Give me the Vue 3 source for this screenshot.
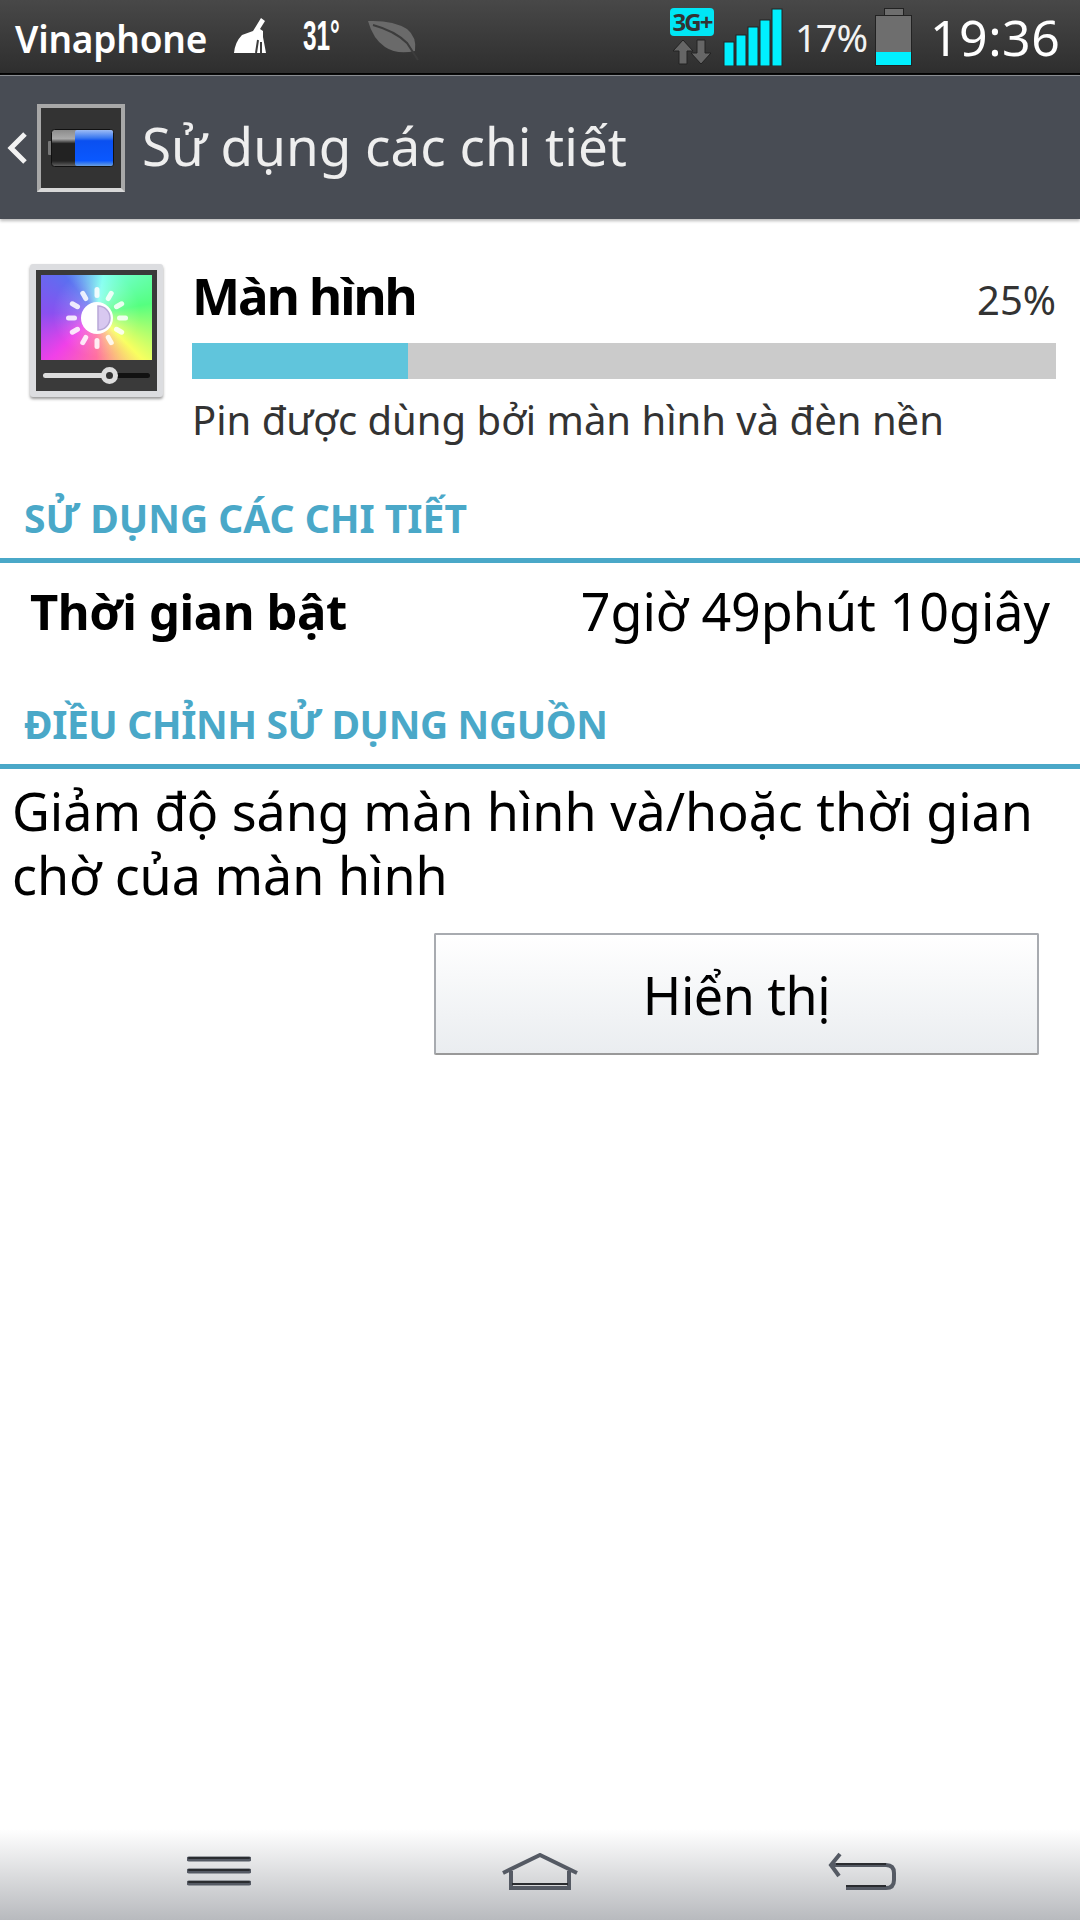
<script setup>
const ticks = [0, 30, 60, 90, 120, 150, 180, 210, 240, 270, 300, 330];
const bars = [
  { x: 1, h: 24 },
  { x: 13, h: 31 },
  { x: 25, h: 39 },
  { x: 37, h: 46 },
  { x: 49, h: 57 }
];
const batteryUsed = 25;
</script>

<template>
  <main class="screen">
    <div class="statusbar">
      <div class="status-left">
        <span class="carrier">Vinaphone</span>
        <svg class="broom" width="34" height="36" viewBox="0 0 34 36">
          <path d="M28 0 L32 3 L27 11 L30 13 L30 19 L33 35 L1 35 Q2 24 9 17 L20 13 Z" fill="#fff" />
          <path d="M25 22 L23 35 M28 24 L28 35" stroke="#3c3c3c" stroke-width="2" />
        </svg>
        <span class="temp">31°</span>
        <svg class="leaf" width="54" height="44" viewBox="0 0 54 44">
          <path d="M1 2 Q26 1 40 10 Q50 18 48 32 Q30 36 18 28 Q6 20 1 2 Z" fill="#6a6a6a" />
          <path d="M6 6 Q28 12 40 24 L51 41" stroke="#3c3c3c" stroke-width="2" fill="none" />
        </svg>
      </div>
      <div class="status-right">
        <div class="network">
          <span class="net-badge">3G+</span>
          <svg width="40" height="26" viewBox="0 0 40 26">
            <path d="M11 1 L21 12 L15 12 L15 25 L7 25 L7 12 L1 12 Z" fill="#666" stroke="#222" />
            <path d="M29 25 L39 14 L33 14 L33 1 L25 1 L25 14 L19 14 Z" fill="#666" stroke="#222" />
          </svg>
        </div>
        <svg class="signal" width="60" height="58" viewBox="0 0 60 58">
          <rect
            v-for="bar in bars"
            :key="bar.x"
            :x="bar.x"
            :y="58 - bar.h"
            width="10"
            :height="bar.h"
            fill="#00f0ff"
            stroke="#222"
          />
        </svg>
        <span class="percent">17%</span>
        <div class="battery">
          <div class="battery-cap"></div>
          <div class="battery-body">
            <div class="battery-level"></div>
          </div>
        </div>
        <span class="clock">19:36</span>
      </div>
    </div>

    <header class="titlebar">
      <svg class="back" width="22" height="36" viewBox="0 0 22 36">
        <path d="M19 4 L5 18 L19 32" fill="none" stroke="#f2f2f2" stroke-width="5" />
      </svg>
      <div class="app-icon">
        <svg width="66" height="40" viewBox="0 0 66 40">
          <defs>
            <linearGradient id="cellBlue" x1="0" y1="0" x2="0" y2="1">
              <stop offset="0" stop-color="#9dbcf5" />
              <stop offset="0.22" stop-color="#3a78f0" />
              <stop offset="0.3" stop-color="#0a50f0" />
              <stop offset="0.85" stop-color="#0a58ff" />
              <stop offset="1" stop-color="#6aa0e0" />
            </linearGradient>
            <linearGradient id="cellDark" x1="0" y1="0" x2="0" y2="1">
              <stop offset="0" stop-color="#8a8a8a" />
              <stop offset="0.25" stop-color="#aaa" />
              <stop offset="0.38" stop-color="#222" />
              <stop offset="0.85" stop-color="#222" />
              <stop offset="1" stop-color="#666" />
            </linearGradient>
          </defs>
          <rect x="0" y="13" width="5" height="14" rx="1" fill="#777" />
          <rect x="3.5" y="1.5" width="62" height="37" rx="3" fill="url(#cellDark)" stroke="#111" />
          <rect x="27" y="2" width="38" height="36" rx="2" fill="url(#cellBlue)" />
        </svg>
      </div>
      <h1 class="title">Sử dụng các chi tiết</h1>
    </header>

    <section class="summary">
      <div class="display-icon">
        <div class="display-frame">
          <div class="display-colors">
            <svg width="64" height="64" viewBox="-32 -32 64 64">
              <rect
                v-for="t in ticks"
                :key="t"
                x="-2.5"
                y="-31"
                width="5"
                height="11"
                rx="2.5"
                fill="#fff"
                fill-opacity="0.85"
                :transform="`rotate(${t})`"
              />
              <circle r="16" fill="#fff" />
              <path d="M1 -12 A12 12 0 0 1 1 12 Z" fill="#d8c8f0" stroke="#b8a8d8" stroke-width="1.5" />
            </svg>
          </div>
          <div class="display-slider">
            <div class="slider-knob"></div>
          </div>
        </div>
      </div>
      <div class="summary-main">
        <div class="summary-head">
          <span class="summary-title">Màn hình</span>
          <span class="summary-value">25%</span>
        </div>
        <div class="usage-bar">
          <div class="usage-fill" :style="{ width: batteryUsed + '%' }"></div>
        </div>
        <p class="summary-desc">Pin được dùng bởi màn hình và đèn nền</p>
      </div>
    </section>

    <h2 class="section-label first">SỬ DỤNG CÁC CHI TIẾT</h2>
    <div class="time-row">
      <span class="time-label">Thời gian bật</span>
      <span class="time-value">7giờ 49phút 10giây</span>
    </div>

    <h2 class="section-label second">ĐIỀU CHỈNH SỬ DỤNG NGUỒN</h2>
    <p class="hint">Giảm độ sáng màn hình và/hoặc thời gian chờ của màn hình</p>
    <div class="actions">
      <button class="show-btn">Hiển thị</button>
    </div>

    <nav class="navbar">
      <svg width="64" height="32" viewBox="0 0 64 32">
        <path d="M2 3 H62 M2 15 H62 M2 27 H62" stroke="#555a64" stroke-width="5" stroke-linecap="round" />
        <path d="M2 2 H62 M2 14 H62 M2 26 H62" stroke="#2a2c30" stroke-width="2" stroke-linecap="round" />
      </svg>
      <svg width="76" height="38" viewBox="0 0 76 38">
        <path d="M1 20 L38 2 L75 20 M9 18 V35 H67 V18" fill="none" stroke="#555a64" stroke-width="4" />
        <path d="M10 31 H66" stroke="#2a2c30" stroke-width="2" />
      </svg>
      <svg width="70" height="40" viewBox="0 0 70 40">
        <path d="M12 2 L3 13 L11 24 M4 13 H58 Q66 13 66 21 V28 Q66 36 58 36 H18" fill="none" stroke="#555a64" stroke-width="4" />
        <path d="M8 12 H58 M18 34 H58" stroke="#2a2c30" stroke-width="2" />
      </svg>
    </nav>
  </main>
</template>

<style scoped>
.screen {
  width: 1080px;
  height: 1920px;
  display: flex;
  flex-direction: column;
  background: #fff;
  font-family: "Noto Sans", "Open Sans", sans-serif;
  color: #000;
  overflow: hidden;
}

.statusbar {
  height: 73px;
  flex: none;
  box-sizing: content-box;
  border-bottom: 2px solid #000;
  display: flex;
  justify-content: space-between;
  align-items: center;
  background: linear-gradient(#484848, #2e2e2e);
  color: #fff;
}

.status-left {
  display: flex;
  align-items: center;
  padding-left: 15px;
}

.carrier {
  font-size: 37px;
  font-weight: 600;
  letter-spacing: -0.2px;
  width: 218px;
  margin-top: 3px;
}

.broom {
  margin-top: -1px;
}

.temp {
  font-family: "Liberation Sans", sans-serif;
  font-size: 42px;
  font-weight: 700;
  transform: scaleX(0.58);
  transform-origin: left center;
  margin-left: 36px;
  width: 64px;
  margin-top: -1px;
  white-space: nowrap;
}

.leaf {
  margin-top: 8px;
}

.status-right {
  display: flex;
  align-items: center;
  padding-right: 23px;
}

.network {
  display: flex;
  flex-direction: column;
  align-items: center;
  gap: 3px;
  width: 46px;
}

.net-badge {
  width: 44px;
  height: 28px;
  background: #00e6f5;
  border-radius: 4px;
  color: #333;
  font-size: 24px;
  font-weight: 700;
  line-height: 28px;
  text-align: center;
  letter-spacing: -2px;
  white-space: nowrap;
}

.signal {
  margin-left: 8px;
}

.percent {
  font-size: 38px;
  margin-left: 12px;
  width: 80px;
  letter-spacing: -1px;
  color: #f2f2f2;
  white-space: nowrap;
}

.battery {
  display: flex;
  flex-direction: column;
  align-items: center;
  width: 37px;
  height: 58px;
}

.battery-cap {
  width: 18px;
  height: 6px;
  background: #6e6e6e;
  border: 1px solid #222;
  border-bottom: 0;
}

.battery-body {
  flex: 1;
  align-self: stretch;
  display: flex;
  align-items: flex-end;
  background: #6e6e6e;
  border: 1px solid #222;
}

.battery-level {
  width: 100%;
  height: 13px;
  background: #00f0ff;
}

.clock {
  font-size: 50px;
  width: 127px;
  margin-left: 18px;
  letter-spacing: 0.5px;
}

.titlebar {
  height: 144px;
  flex: none;
  box-sizing: border-box;
  display: flex;
  align-items: center;
  padding-left: 6px;
  background: #484c54;
  border-top: 1px solid #8a8d92;
  box-shadow: 0 2px 3px #bbb;
}

.back {
  flex: none;
}

.app-icon {
  width: 88px;
  height: 88px;
  flex: none;
  box-sizing: border-box;
  margin-left: 9px;
  display: flex;
  align-items: center;
  justify-content: center;
  background: #333;
  border: 4px solid #a8a8a8;
  border-bottom-color: #d8d8d8;
}

.title {
  margin: -4px 0 0 17px;
  font-size: 53px;
  font-weight: 400;
  color: #eee;
  white-space: nowrap;
}

.summary {
  display: flex;
  padding: 45px 24px 0 30px;
  flex: none;
}

.display-icon {
  width: 133px;
  height: 133px;
  flex: none;
  box-sizing: border-box;
  padding: 6px;
  background: #dcdde0;
  border-radius: 3px;
  box-shadow: 0 2px 3px #999;
}

.display-frame {
  height: 100%;
  box-sizing: border-box;
  padding: 5px;
  background: #3a3a3a;
}

.display-colors {
  height: 85px;
  display: flex;
  align-items: center;
  justify-content: center;
  background:
    radial-gradient(circle at 50% 45%, rgba(255, 255, 255, 0.3), rgba(255, 255, 255, 0) 60%),
    conic-gradient(from 10deg at 50% 45%, #7ffff0, #55ff80 70deg, #f8ff60 125deg, #ff70a0 170deg, #f040e8 215deg, #8a50f0 260deg, #5a70f0 310deg, #7ffff0);
}

.display-slider {
  position: relative;
  height: 5px;
  margin: 13px 2px 0;
  background: linear-gradient(to right, #ddd 0 57%, #111 57%);
  border-radius: 3px;
}

.slider-knob {
  position: absolute;
  left: 58px;
  top: -6px;
  width: 7px;
  height: 7px;
  background: #333;
  border: 5px solid #ddd;
  border-radius: 50%;
}

.summary-main {
  flex: 1;
  margin-left: 29px;
}

.summary-head {
  display: flex;
  justify-content: space-between;
  align-items: flex-start;
  height: 79px;
  margin-top: -45px;
  padding-top: 45px;
  box-sizing: content-box;
}

.summary-title {
  font-size: 51px;
  font-weight: 700;
  line-height: 70px;
  letter-spacing: -2px;
  margin-top: -4px;
}

.summary-value {
  font-size: 40px;
  color: #333;
  line-height: 70px;
  margin-top: 1px;
}

.usage-bar {
  height: 36px;
  background: #cbcbcb;
}

.usage-fill {
  height: 100%;
  background: #60c5dc;
}

.summary-desc {
  margin: 15px 0 0;
  font-size: 40px;
  line-height: 52px;
  color: #333;
  white-space: nowrap;
}

.section-label {
  margin: 0;
  padding: 0 0 5px 24px;
  font-size: 39px;
  font-weight: 700;
  color: #4aa8c8;
  border-bottom: 5px solid #4aa8c8;
  flex: none;
  line-height: 71px;
}

.section-label.first {
  margin-top: 36px;
}

.section-label.second {
  letter-spacing: -0.4px;
  margin-top: 30px;
}

.time-row {
  height: 95px;
  flex: none;
  display: flex;
  justify-content: space-between;
  align-items: center;
  padding: 0 30px;
}

.time-label {
  font-size: 49px;
  font-weight: 700;
  letter-spacing: -0.4px;
}

.time-value {
  font-size: 52px;
}

.hint {
  margin: 0;
  padding: 10px 12px 0;
  font-size: 52px;
  line-height: 64px;
}

.actions {
  display: flex;
  justify-content: flex-end;
  padding: 26px 41px 0 0;
}

.show-btn {
  width: 605px;
  height: 122px;
  font-family: inherit;
  font-size: 52px;
  letter-spacing: -0.5px;
  color: #000;
  background: linear-gradient(#fff, #eaedf0);
  border: 2px solid #a8abb0;
  border-bottom: 2px solid #999;
  border-radius: 2px;
  padding: 0;
}

.navbar {
  margin-top: auto;
  height: 85px;
  flex: none;
  display: flex;
  align-items: center;
  justify-content: space-between;
  padding: 0 182px 6px 187px;
  background: linear-gradient(#fff, #b8babe);
}
</style>

<style>
html, body {
  margin: 0;
  background: #fff;
}
</style>
